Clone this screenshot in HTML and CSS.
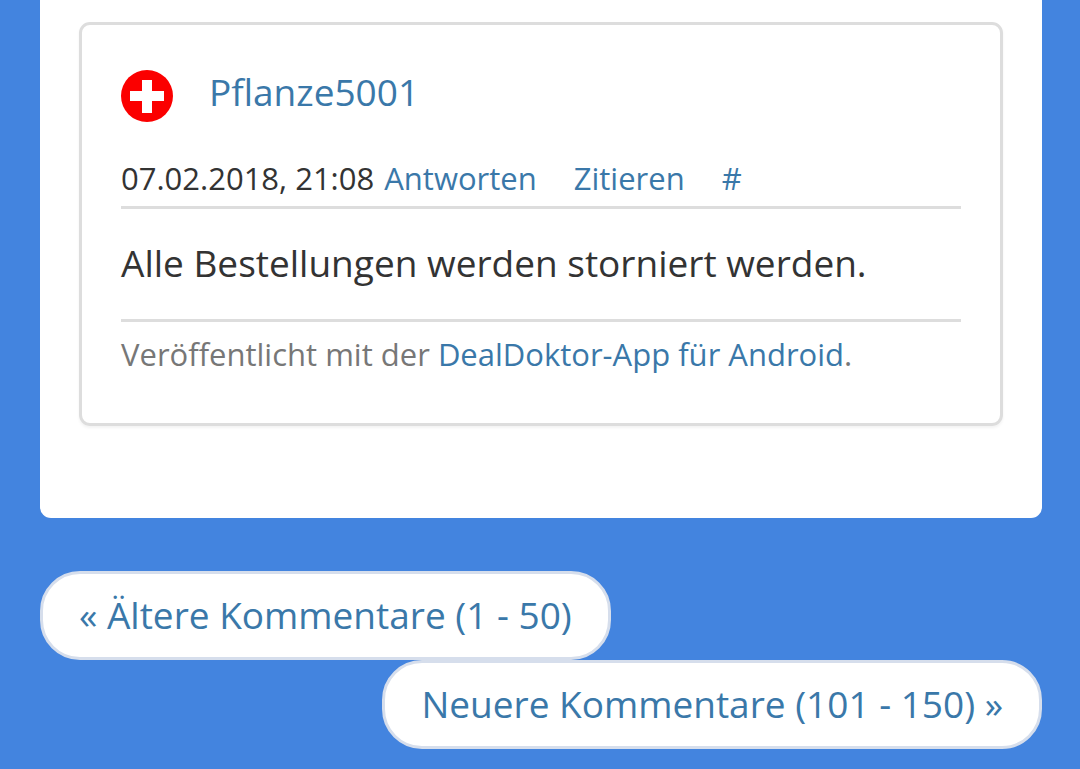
FILE: index.html
```html
<!DOCTYPE html>
<html lang="de">
<head>
<meta charset="utf-8">
<meta name="viewport" content="width=device-width, initial-scale=1">
<title>Kommentare</title>
<link rel="stylesheet" href="styles.css">
</head>
<body>
<main class="panel">
  <article class="comment">
    <header class="author">
      <svg class="avatar" viewBox="0 0 52 52" aria-hidden="true">
        <circle cx="26" cy="26" r="26" fill="#fb0000"/>
        <path d="M21 10h10v11h12v10H31v12H21V31H9V21h12z" fill="#fff"/>
      </svg>
      <a class="name" href="#profil">Pflanze5001</a>
    </header>
    <div class="meta">
      <time datetime="2018-02-07T21:08">07.02.2018, 21:08</time>
      <a class="reply" href="#antworten">Antworten</a>
      <a class="quote" href="#zitieren">Zitieren</a>
      <a href="#kommentar">#</a>
    </div>
    <p class="message">Alle Bestellungen werden storniert werden.</p>
    <p class="source">Veröffentlicht mit der <a href="#app">DealDoktor-App für Android</a>.</p>
  </article>
</main>
<nav class="pager" aria-label="Kommentarseiten">
  <a class="page-link older" href="#aeltere">« Ältere Kommentare (1 - 50)</a>
  <a class="page-link newer" href="#neuere">Neuere Kommentare (101 - 150) »</a>
</nav>
</body>
</html>
```
FILE: styles.css
```css
* { box-sizing: border-box; }
body {
  margin: 0;
  padding: 0 38px 20px 40px;
  background: #4384df;
  color: #333;
  font-family: "Open Sans", "Noto Sans", sans-serif;
  font-size: 37px;
}
a { color: #3a78a9; text-decoration: none; }
.panel {
  padding: 22px 39px 92px;
  background: #fff;
  border-radius: 0 0 11px 11px;
}
.comment {
  padding: 38px 39px 47px;
  border: 3px solid #ddd;
  border-radius: 11px;
  box-shadow: 0 2px 3px rgba(0, 0, 0, 0.05);
}
.author {
  display: flex;
  gap: 36px;
  line-height: 58px;
}
.avatar { width: 52px; height: 52px; margin-top: 7px; }
.meta {
  display: flex;
  flex-wrap: wrap;
  column-gap: 10px;
  margin-top: 33px;
  padding-bottom: 5px;
  border-bottom: 3px solid #ddd;
  font-size: 31px;
  line-height: 46px;
}
.reply, .quote { margin-right: 27px; }
.message {
  margin: 0;
  padding: 28px 0 30px;
  border-bottom: 3px solid #ddd;
  line-height: 52px;
}
.source {
  margin: 0;
  padding-top: 10px;
  color: #777;
  font-size: 31px;
  line-height: 44px;
}
.pager {
  display: flex;
  flex-direction: column;
  margin-top: 53px;
}
.page-link {
  padding: 14px 36px 16px;
  background: #fff;
  border: 3px solid #d6deec;
  border-radius: 40px;
  line-height: 53px;
}
.older { align-self: flex-start; }
.newer { align-self: flex-end; }
```
